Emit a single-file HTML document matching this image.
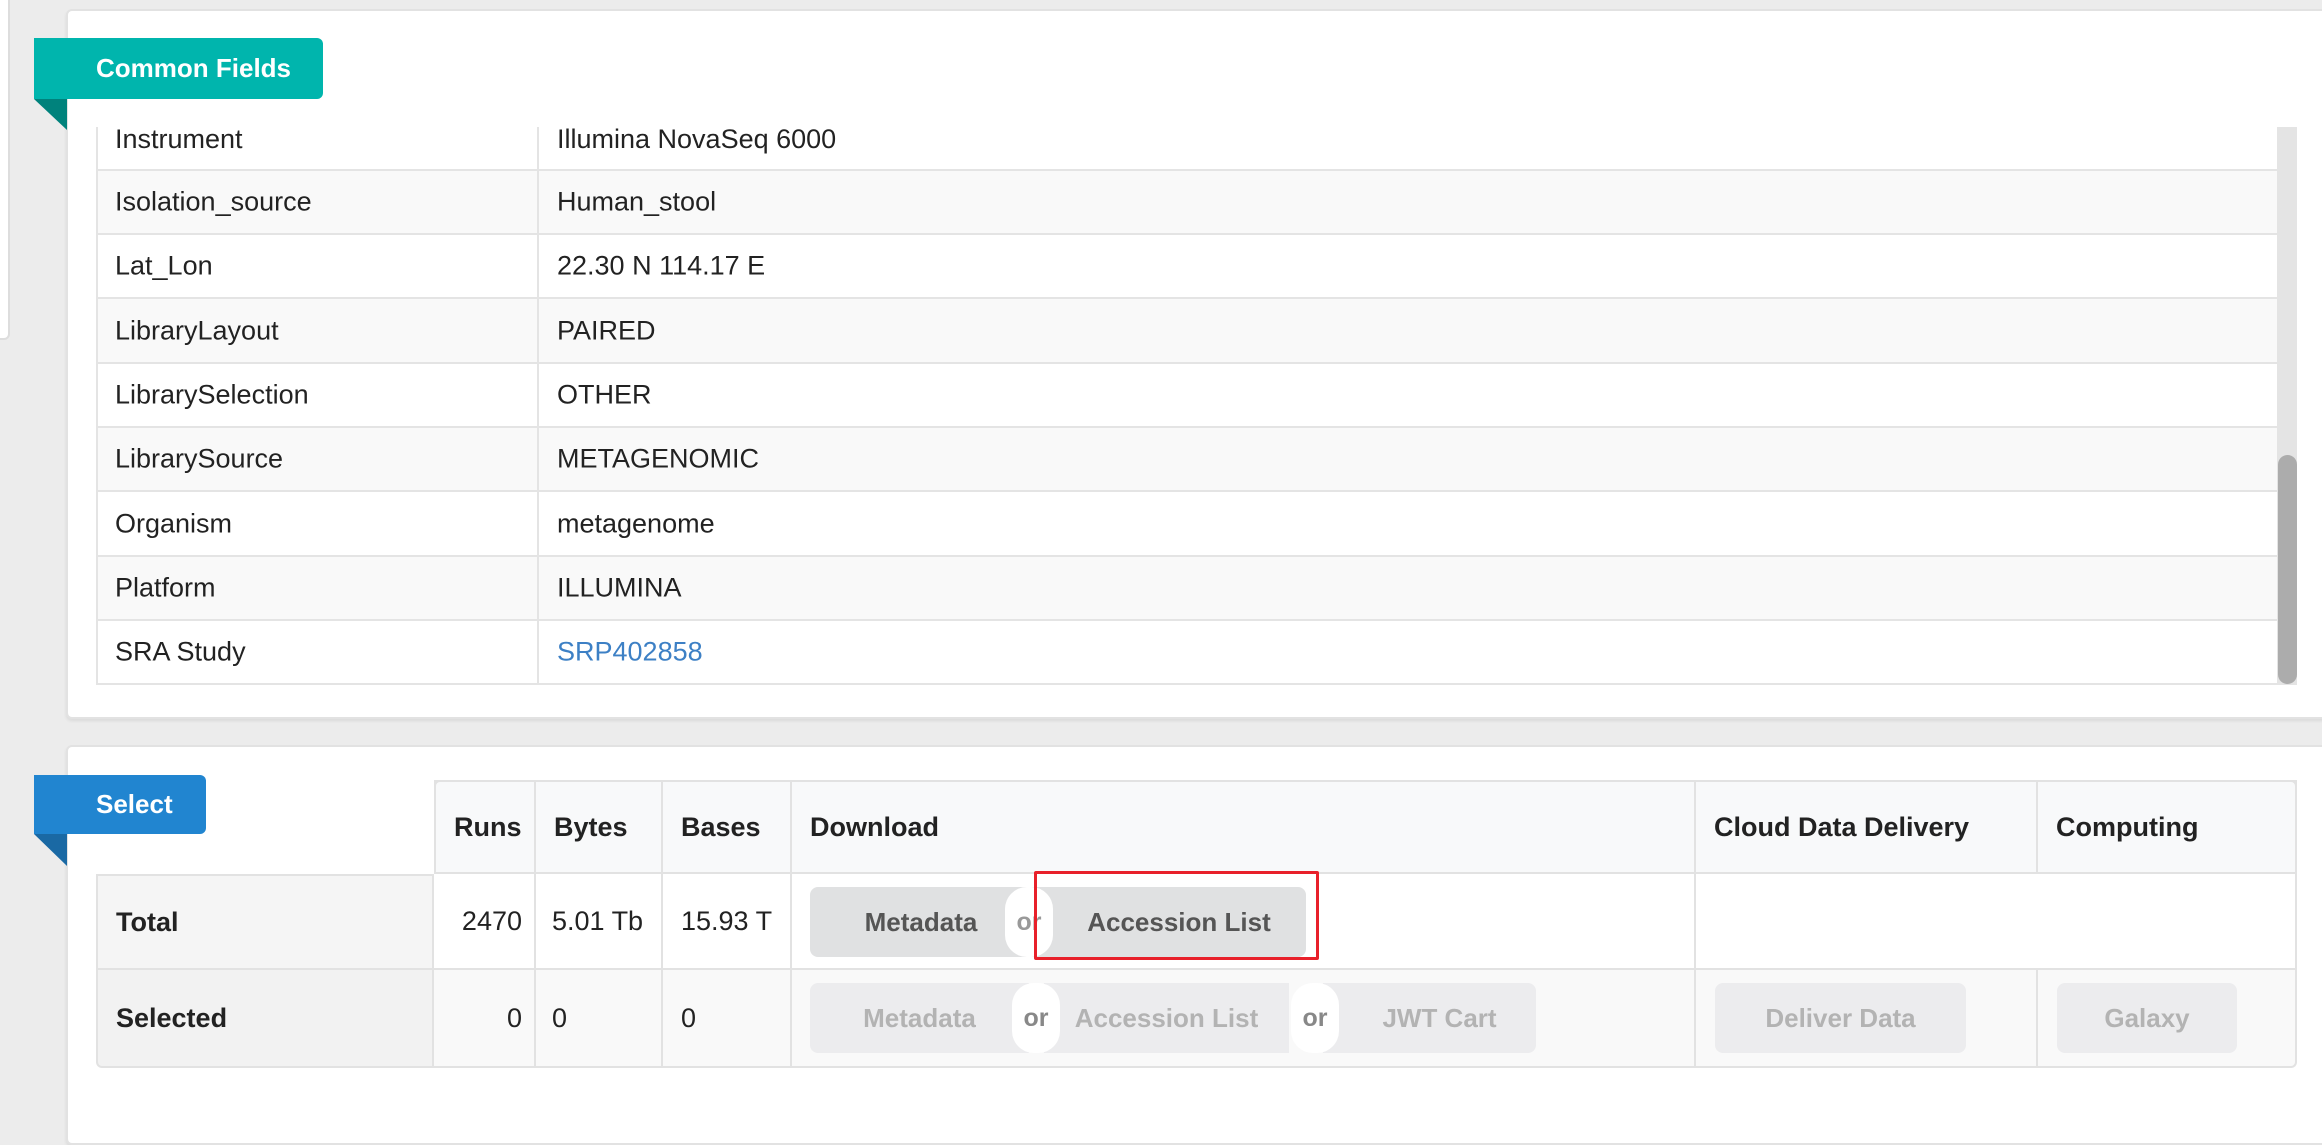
<!DOCTYPE html>
<html><head><meta charset="utf-8"><style>
*{box-sizing:border-box;margin:0;padding:0}
body{width:2322px;height:1083px;background:#ececec;font-family:"Liberation Sans",sans-serif;position:relative;overflow:hidden;color:#222}
.abs{position:absolute}
.card{position:absolute;background:#fff;border:2px solid #e2e2e2;border-radius:6px;box-shadow:0 2px 3px rgba(0,0,0,.08)}
.row{position:absolute;left:96px;width:2181px;border-bottom:2px solid #e4e4e4;font-size:27px;}
.row span{position:absolute;top:50%;transform:translateY(-50%)}
.k{left:19px}.v{left:461px}
.split{position:absolute;left:441px;top:0;bottom:0;border-left:2px solid #e4e4e4}
.cell{position:absolute;border-right:2px solid #e2e2e2;border-bottom:2px solid #e2e2e2;font-size:27px;display:flex;align-items:center;padding-left:18px}
.b{font-weight:bold}
.btn{position:absolute;border-radius:8px;font-size:26px;font-weight:bold;display:flex;align-items:center;justify-content:center}
.on{background:#e0e1e2;color:#555}
.off{background:#ececee;color:#b3b3b3}
.or{position:absolute;width:44px;height:70px;border-radius:22px;background:#fff;font-size:25px;font-weight:bold;display:flex;align-items:center;justify-content:center;color:#999}
</style></head><body>
<div class="abs" style="left:-10px;top:-10px;width:20px;height:350px;background:#fff;border:2px solid #ddd;border-radius:6px"></div>

<div class="card" style="left:66px;top:9px;width:2300px;height:710px"></div>
<div class="abs" style="left:34px;top:99px;width:0;height:0;border-top:31px solid #00827c;border-left:33px solid transparent"></div>
<div class="abs" style="left:34px;top:38px;width:289px;height:61px;background:#00b5ad;border-radius:0 6px 6px 0;color:#fff;font-weight:bold;font-size:26px;line-height:61px;padding-left:62px">Common Fields</div>

<div class="row" style="top:127px;height:44px;background:#fff;overflow:hidden"><div class="split"></div><span class="k" style="top:-3px;transform:none">Instrument</span><span class="v" style="top:-3px;transform:none">Illumina NovaSeq 6000</span></div>
<div class="row" style="top:171px;height:64px;background:#f9f9f9"><div class="split"></div><span class="k">Isolation_source</span><span class="v">Human_stool</span></div>
<div class="row" style="top:235px;height:64px;background:#fff"><div class="split"></div><span class="k">Lat_Lon</span><span class="v">22.30 N 114.17 E</span></div>
<div class="row" style="top:299px;height:65px;background:#f9f9f9"><div class="split"></div><span class="k">LibraryLayout</span><span class="v">PAIRED</span></div>
<div class="row" style="top:364px;height:64px;background:#fff"><div class="split"></div><span class="k">LibrarySelection</span><span class="v">OTHER</span></div>
<div class="row" style="top:428px;height:64px;background:#f9f9f9"><div class="split"></div><span class="k">LibrarySource</span><span class="v">METAGENOMIC</span></div>
<div class="row" style="top:492px;height:65px;background:#fff"><div class="split"></div><span class="k">Organism</span><span class="v">metagenome</span></div>
<div class="row" style="top:557px;height:64px;background:#f9f9f9"><div class="split"></div><span class="k">Platform</span><span class="v">ILLUMINA</span></div>
<div class="row" style="top:621px;height:64px;background:#fff"><div class="split"></div><span class="k">SRA Study</span><span class="v" style="color:#3d80c5">SRP402858</span></div>
<div class="abs" style="left:96px;top:127px;width:2px;height:558px;background:#e4e4e4"></div>
<div class="abs" style="left:2277px;top:127px;width:20px;height:558px;background:#e4e4e4"></div>
<div class="abs" style="left:2278px;top:455px;width:19px;height:229px;background:#acacac;border-radius:10px"></div>

<div class="card" style="left:66px;top:745px;width:2300px;height:400px"></div>
<div class="abs" style="left:34px;top:834px;width:0;height:0;border-top:32px solid #1a69a4;border-left:33px solid transparent"></div>
<div class="abs" style="left:34px;top:775px;width:172px;height:59px;background:#2185d0;border-radius:0 6px 6px 0;color:#fff;font-weight:bold;font-size:26px;line-height:59px;padding-left:62px">Select</div>

<div class="abs" style="left:434px;top:780px;width:1863px;height:94px;background:#f8f9fa;border:2px solid #e2e2e2;border-radius:6px 6px 0 0"></div>
<div class="cell b" style="left:434px;top:780px;width:102px;height:94px;border-left:2px solid #e2e2e2;border-top:2px solid #e2e2e2">Runs</div>
<div class="cell b" style="left:536px;top:780px;width:127px;height:94px;border-top:2px solid #e2e2e2">Bytes</div>
<div class="cell b" style="left:663px;top:780px;width:129px;height:94px;border-top:2px solid #e2e2e2">Bases</div>
<div class="cell b" style="left:792px;top:780px;width:904px;height:94px;border-top:2px solid #e2e2e2">Download</div>
<div class="cell b" style="left:1696px;top:780px;width:342px;height:94px;border-top:2px solid #e2e2e2">Cloud Data Delivery</div>
<div class="cell b" style="left:2038px;top:780px;width:259px;height:94px;border-top:2px solid #e2e2e2">Computing</div>

<div class="cell b" style="left:96px;top:874px;width:338px;height:96px;background:#f5f5f5;border-left:2px solid #e2e2e2;border-top:2px solid #e2e2e2">Total</div>
<div class="cell" style="left:434px;top:874px;width:102px;height:96px;background:#fff;padding:0 12px 0 0;justify-content:flex-end">2470</div>
<div class="cell" style="left:536px;top:874px;width:127px;height:96px;background:#fff;padding-left:16px">5.01 Tb</div>
<div class="cell" style="left:663px;top:874px;width:129px;height:96px;background:#fff">15.93 T</div>
<div class="cell" style="left:792px;top:874px;width:904px;height:96px;background:#fff"></div>
<div class="cell" style="left:1696px;top:874px;width:601px;height:96px;background:#fff"></div>

<div class="cell b" style="left:96px;top:970px;width:338px;height:98px;background:#f2f2f2;border-left:2px solid #e2e2e2;border-radius:0 0 0 6px">Selected</div>
<div class="cell" style="left:434px;top:970px;width:102px;height:98px;background:#f9f9f9;padding:0 12px 0 0;justify-content:flex-end">0</div>
<div class="cell" style="left:536px;top:970px;width:127px;height:98px;background:#f9f9f9;padding-left:16px">0</div>
<div class="cell" style="left:663px;top:970px;width:129px;height:98px;background:#f9f9f9">0</div>
<div class="cell" style="left:792px;top:970px;width:904px;height:98px;background:#f9f9f9"></div>
<div class="cell" style="left:1696px;top:970px;width:342px;height:98px;background:#f9f9f9"></div>
<div class="cell" style="left:2038px;top:970px;width:259px;height:98px;background:#f9f9f9;border-radius:0 0 6px 0"></div>

<div class="btn on" style="left:810px;top:887px;width:222px;height:70px;border-radius:8px 0 0 8px">Metadata</div>
<div class="btn on" style="left:1032px;top:887px;width:274px;height:70px;border-radius:0 8px 8px 0;padding-left:20px">Accession List</div>
<div class="or" style="left:1005px;top:887px;width:48px">or</div>
<div class="abs" style="left:1034px;top:871px;width:285px;height:89px;border:3px solid #e8202a;border-radius:2px"></div>

<div class="btn off" style="left:810px;top:983px;width:219px;height:70px;border-radius:8px 0 0 8px">Metadata</div>
<div class="btn off" style="left:1044px;top:983px;width:245px;height:70px;border-radius:0">Accession List</div>
<div class="btn off" style="left:1323px;top:983px;width:213px;height:70px;border-radius:0 8px 8px 0;padding-left:20px">JWT Cart</div>
<div class="or" style="left:1012px;top:983px;width:48px;color:#888">or</div>
<div class="or" style="left:1291px;top:983px;width:48px;color:#888">or</div>

<div class="btn off" style="left:1715px;top:983px;width:251px;height:70px">Deliver Data</div>
<div class="btn off" style="left:2057px;top:983px;width:180px;height:70px">Galaxy</div>
</body></html>
